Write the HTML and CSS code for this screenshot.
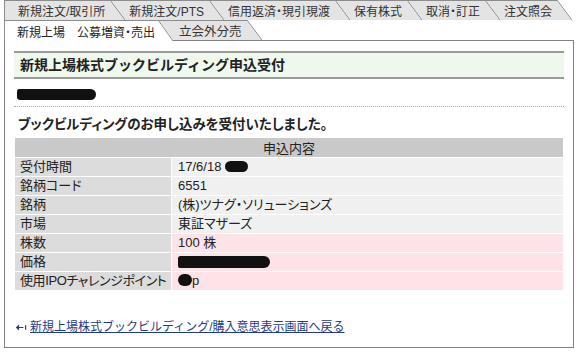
FILE: index.html
```html
<!DOCTYPE html>
<html>
<head>
    <meta charset="utf-8">
    <title>新規上場株式ブックビルディング申込受付</title>
    <link rel="stylesheet" href="styles.css">
</head>
<body>
    <div class="page">
        <div class="tabs">
            <a class="tab first" href="#">新規注文/取引所</a>
            <a class="tab" href="#">新規注文/PTS</a>
            <a class="tab" href="#">信用返済・現引現渡</a>
            <a class="tab" href="#">保有株式</a>
            <a class="tab" href="#">取消・訂正</a>
            <a class="tab last" href="#">注文照会</a>
        </div>
        <div class="tabs sub-tabs">
            <a class="tab first active" href="#">新規上場　公募増資・売出</a>
            <a class="tab last" href="#">立会外分売</a>
        </div>

        <div class="panel">
            <h1 class="panel-title">新規上場株式ブックビルディング申込受付</h1>

            <div class="account">
                <span class="mask mask-name"></span>
            </div>

            <p class="message">ブックビルディングのお申し込みを受付いたしました。</p>

            <table class="detail">
                <colgroup>
                    <col class="col-label">
                    <col>
                </colgroup>
                <tr>
                    <th colspan="2">申込内容</th>
                </tr>
                <tr>
                    <td class="label">受付時間</td>
                    <td class="value">17/6/18 <span class="mask mask-time"></span></td>
                </tr>
                <tr>
                    <td class="label">銘柄コード</td>
                    <td class="value">6551</td>
                </tr>
                <tr>
                    <td class="label">銘柄</td>
                    <td class="value">(株)ツナグ・ソリューションズ</td>
                </tr>
                <tr>
                    <td class="label">市場</td>
                    <td class="value">東証マザーズ</td>
                </tr>
                <tr class="order">
                    <td class="label">株数</td>
                    <td class="value">100 株</td>
                </tr>
                <tr class="order">
                    <td class="label">価格</td>
                    <td class="value"><span class="mask mask-price"></span></td>
                </tr>
                <tr class="order">
                    <td class="label label-long">使用IPOチャレンジポイント</td>
                    <td class="value"><span class="mask mask-point"></span>p</td>
                </tr>
            </table>

            <div class="back">
                <svg class="back-icon" width="12" height="9" viewBox="0 0 12 9">
                    <path d="M0.8 4.5L4 1.6V7.4Z" fill="#1f3c88"/>
                    <path d="M3 4.5H8.4M10.6 2.2V6.8" stroke="#1f3c88" stroke-width="1.2" fill="none"/>
                </svg>
                <a href="#">新規上場株式ブックビルディング/購入意思表示画面へ戻る</a>
            </div>
        </div>
    </div>
</body>
</html>
```

FILE: styles.css
```css
* {
    margin: 0;
    padding: 0;
    box-sizing: border-box;
}

body {
    background: #fff;
    color: #222;
    font-family: "Liberation Sans", "Noto Sans CJK JP", sans-serif;
    font-feature-settings: "palt";
}

.page {
    padding-left: 4px;
    width: 574px;
}

/* tab rows */
.tabs {
    display: flex;
    height: 20px;
}

.tab {
    --tab-bg: #e4e4e4;
    position: relative;
    display: flex;
    align-items: center;
    height: 20px;
    padding: 0 5px 0 19px;
    background: var(--tab-bg);
    border-top: 1px solid #8c8c8c;
    color: #333;
    font-size: 12px;
    text-decoration: none;
    white-space: nowrap;
}

.tab.first {
    border-left: 1px solid #8c8c8c;
    padding-left: 13px;
}

.tab::after {
    content: '';
    position: absolute;
    top: -1px;
    right: -15px;
    width: 15px;
    height: calc(100% + 1px);
    background: linear-gradient(to top right, var(--tab-bg) calc(50% - 0.7px), #8c8c8c 50%, transparent calc(50% + 0.7px));
    z-index: 1;
}

.sub-tabs .tab.first {
    padding-left: 12px;
    padding-right: 3px;
}

.sub-tabs .tab.last {
    padding-left: 21px;
    font-size: 12.5px;
}

.tab.active {
    --tab-bg: #fff;
    height: 21px;
    color: #222;
}

/* main panel */
.panel {
    width: 570px;
    height: 308px;
    border: 1px solid #808080;
    padding: 10px 9px 0;
}

.panel-title {
    height: 28px;
    padding-left: 6px;
    background: #eff8ed;
    border-top: 2px solid #9a9a9a;
    border-bottom: 2px solid #9a9a9a;
    font-size: 14px;
    font-weight: bold;
    font-feature-settings: normal;
    line-height: 24px;
    color: #222;
}

.account {
    height: 28px;
    padding: 6px 0 0 3px;
    border-bottom: 1px dotted #a8a8a8;
}

.mask {
    display: inline-block;
    background: #111;
    border-radius: 6px;
    vertical-align: middle;
}

.mask-name {
    width: 79px;
    height: 11px;
    border-radius: 3px 7px 7px 4px;
}

.mask-time {
    width: 23px;
    height: 11px;
    margin-top: -2px;
}

.mask-price {
    width: 92px;
    height: 12px;
    margin-top: -2px;
    border-radius: 3px 7px 7px 3px;
}

.mask-point {
    width: 14px;
    height: 12px;
    margin-top: -3px;
    border-radius: 7px;
}

.message {
    margin: 8px 0 2px 4px;
    font-size: 13.5px;
    font-weight: bold;
    line-height: 20px;
}

/* detail table */
.detail {
    width: 550px;
    table-layout: fixed;
    border-collapse: separate;
    border-spacing: 1px;
    font-size: 13px;
}

.col-label {
    width: 156px;
}

.detail th {
    height: 18px;
    background: #c9c9c9;
    font-weight: normal;
    text-align: center;
}

.detail td {
    height: 18px;
    line-height: 16px;
    padding: 0 5px;
    white-space: nowrap;
}

.detail .label {
    background: #dcdcdc;
}

.detail .label-long {
    letter-spacing: -0.4px;
}

.detail .value {
    background: #f0f0f0;
    padding-left: 6px;
}

.detail .order .value {
    background: #fde2e8;
}

/* back link */
.back {
    display: flex;
    align-items: center;
    gap: 3px;
    margin-top: 28px;
    padding-left: 1px;
    font-size: 12px;
    line-height: 16px;
}

.back a {
    color: #1f3c88;
    font-feature-settings: normal;
}
```
